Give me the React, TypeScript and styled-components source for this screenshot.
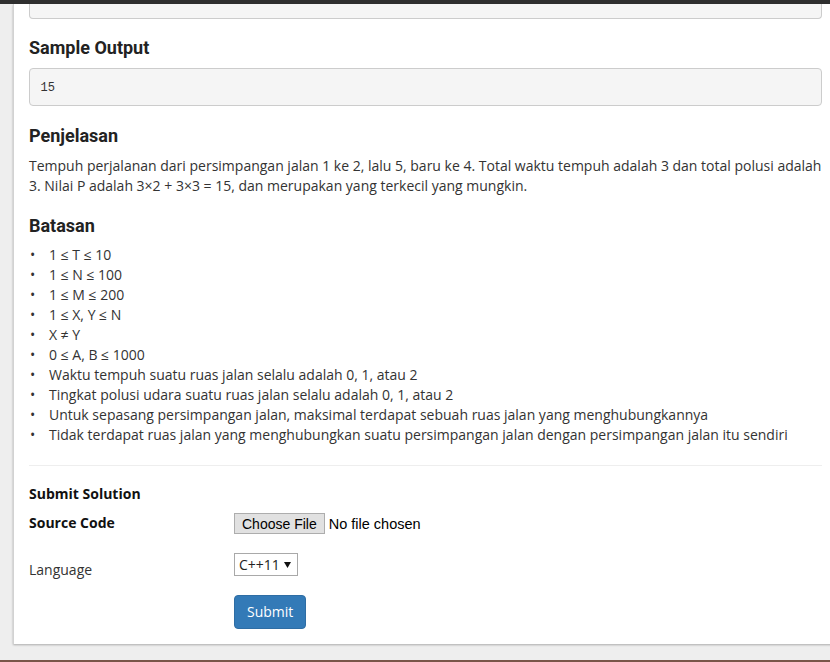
import React from "react";
import styled, { createGlobalStyle } from "styled-components";

const GlobalStyle = createGlobalStyle`
  * { box-sizing: border-box; }
  html, body {
    margin: 0;
    padding: 0;
    background: #eee;
    overflow: hidden;
  }
  body {
    font-family: "Open Sans", "Liberation Sans", sans-serif;
    font-size: 14px;
    line-height: 20px;
    color: #333;
  }
`;

const Page = styled.div`
  width: 830px;
  height: 662px;
  overflow: hidden;
  background: #eee;
  display: flex;
  flex-direction: column;
`;

const TopBar = styled.div`
  flex: none;
  height: 4px;
  background: #2f2f2f;
`;

const Main = styled.main`
  flex: none;
  padding: 0 0 16px 13px;
`;

const Card = styled.section`
  width: 824px;
  background: #fff;
  border-left: 1px solid #d2d2d2;
  box-shadow: 0 1px 2px rgba(0, 0, 0, 0.28);
  padding: 0 15px 15px;
`;

const BottomBar = styled.footer`
  flex: none;
  height: 12px;
  background: #795548;
`;

const PreTail = styled.div`
  height: 15px;
  background: #f5f5f5;
  border: 1px solid #ccc;
  border-top: none;
  border-radius: 0 0 4px 4px;
`;

const Heading = styled.h3<{ $first?: boolean }>`
  font-family: Roboto, "Liberation Sans", sans-serif;
  font-weight: 700;
  font-size: 18px;
  line-height: 1.1;
  margin: ${(p) => (p.$first ? 19 : 20)}px 0 10px;
  color: #222;
`;

const Pre = styled.pre`
  margin: 0 0 10px;
  padding: 11px 9.5px 8px 10.5px;
  font-family: "Liberation Mono", monospace;
  font-size: 12px;
  line-height: 17px;
  color: #333;
  background: #f5f5f5;
  border: 1px solid #ccc;
  border-radius: 4px;
`;

const Paragraph = styled.p`
  margin: 0 0 10px;
`;

const List = styled.ul`
  margin: 0 0 10px;
  padding: 0;
  list-style: none;
`;

const Item = styled.li`
  display: flex;
  &::before {
    content: "•";
    flex: 0 0 19px;
    padding-left: 1px;
  }
`;

const Rule = styled.hr`
  border: 0;
  border-top: 1px solid #eee;
  margin: 20px 0 18px;
`;

const FormTitle = styled.div`
  font-weight: 700;
  color: #111;
  margin-bottom: 9px;
`;

const FormRow = styled.div<{ $spacing: number }>`
  display: grid;
  grid-template-columns: 205px 1fr;
  align-items: start;
  margin-bottom: ${(p) => p.$spacing}px;
`;

const Label = styled.label<{ $bold?: boolean; $offset?: number }>`
  font-weight: ${(p) => (p.$bold ? 700 : 400)};
  color: ${(p) => (p.$bold ? "#111" : "#333")};
  padding-top: ${(p) => p.$offset ?? 0}px;
`;

const FileField = styled.div`
  display: flex;
  align-items: center;
  gap: 4px;
  font-family: "Liberation Sans", Arial, sans-serif;
  font-size: 14.5px;
  color: #000;
`;

const FileButton = styled.button`
  height: 21px;
  padding: 1px 7px 0;
  font-family: "Liberation Sans", Arial, sans-serif;
  font-size: 14px;
  line-height: 19px;
  color: #000;
  background: #e1e1e1;
  border: 1px solid #adadad;
  border-radius: 0;
`;

const SelectBox = styled.div`
  width: 64px;
  height: 23px;
  display: flex;
  align-items: center;
  padding: 0 6px 0 4px;
  background: #fff;
  border: 1px solid #a9a9a9;
  color: #222;
  font-size: 14px;
`;

const Arrow = styled.svg`
  margin-left: auto;
`;

const SubmitButton = styled.button`
  justify-self: start;
  padding: 6px 12px;
  font-family: "Open Sans", "Liberation Sans", sans-serif;
  font-size: 14px;
  line-height: 20px;
  color: #fff;
  background: #337ab7;
  border: 1px solid #2e6da4;
  border-radius: 4px;
`;

const constraints = [
  "1 ≤ T ≤ 10",
  "1 ≤ N ≤ 100",
  "1 ≤ M ≤ 200",
  "1 ≤ X, Y ≤ N",
  "X ≠ Y",
  "0 ≤ A, B ≤ 1000",
  "Waktu tempuh suatu ruas jalan selalu adalah 0, 1, atau 2",
  "Tingkat polusi udara suatu ruas jalan selalu adalah 0, 1, atau 2",
  "Untuk sepasang persimpangan jalan, maksimal terdapat sebuah ruas jalan yang menghubungkannya",
  "Tidak terdapat ruas jalan yang menghubungkan suatu persimpangan jalan dengan persimpangan jalan itu sendiri",
];

export default function App() {
  return (
    <Page>
      <GlobalStyle />
      <TopBar />
      <Main>
        <Card>
          <PreTail />
          <Heading $first>Sample Output</Heading>
          <Pre>15</Pre>
          <Heading>Penjelasan</Heading>
          <Paragraph>
            Tempuh perjalanan dari persimpangan jalan 1 ke 2, lalu 5, baru ke 4. Total waktu tempuh adalah 3 dan
            total polusi adalah 3. Nilai P adalah 3×2 + 3×3 = 15, dan merupakan yang terkecil yang mungkin.
          </Paragraph>
          <Heading>Batasan</Heading>
          <List>
            {constraints.map((c) => (
              <Item key={c}>{c}</Item>
            ))}
          </List>
          <Rule />
          <FormTitle>Submit Solution</FormTitle>
          <FormRow $spacing={19}>
            <Label $bold>Source Code</Label>
            <FileField>
              <FileButton type="button">Choose File</FileButton>
              <span>No file chosen</span>
            </FileField>
          </FormRow>
          <FormRow $spacing={15}>
            <Label $offset={7}>Language</Label>
            <SelectBox>
              <span>C++11</span>
              <Arrow width="7" height="6" viewBox="0 0 7 6">
                <path d="M0 0 H7 L3.5 6 Z" fill="#111" />
              </Arrow>
            </SelectBox>
          </FormRow>
          <FormRow $spacing={0}>
            <span />
            <SubmitButton type="button">Submit</SubmitButton>
          </FormRow>
        </Card>
      </Main>
      <BottomBar />
    </Page>
  );
}
